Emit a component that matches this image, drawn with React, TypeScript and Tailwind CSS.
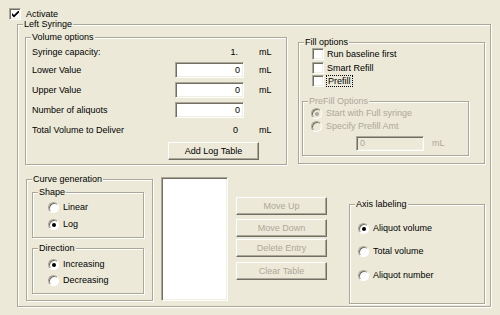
import React from 'react';

const GroupBox: React.FC<{ label: string; className?: string; disabled?: boolean; children?: React.ReactNode }> = ({ label, className = '', disabled, children }) => (
  <div className={`relative border border-[#ACA899] shadow-[inset_1px_1px_0_#ffffff,1px_1px_0_#ffffff] ${className}`}>
    <span className={`absolute -top-[7px] left-[5px] px-[1px] bg-[#ECE9D8] leading-[12px] whitespace-nowrap ${disabled ? 'text-[#ACA899]' : 'text-black'}`}>
      {label}
    </span>
    {children}
  </div>
);

const Sunken: React.FC<{ className?: string; children?: React.ReactNode }> = ({ className = '', children }) => (
  <div className={`border border-t-[#ACA899] border-l-[#ACA899] border-b-white border-r-white shadow-[inset_1px_1px_0_#716F64,inset_-1px_-1px_0_#F1EFE2] ${className}`}>
    {children}
  </div>
);

const Checkbox: React.FC<{ checked?: boolean }> = ({ checked }) => (
  <Sunken className="w-[12px] h-[12px] bg-white flex items-center justify-center shrink-0">
    {checked && (
      <svg width="7" height="7" viewBox="0 0 7 7">
        <path d="M0 2 L2 4 L7 -1 L7 1.5 L2 6.5 L0 4.5 Z" fill="#000" />
      </svg>
    )}
  </Sunken>
);

const Radio: React.FC<{ checked?: boolean; disabled?: boolean }> = ({ checked, disabled }) => (
  <div
    className={`w-[11px] h-[11px] rounded-full border border-t-[#ACA899] border-l-[#ACA899] border-b-white border-r-white shadow-[inset_1px_1px_0_#716F64] flex items-center justify-center shrink-0 ${disabled ? 'bg-[#ECE9D8]' : 'bg-white'}`}
  >
    {checked && <div className={`w-[4px] h-[4px] rounded-full ${disabled ? 'bg-[#ACA899]' : 'bg-black'}`} />}
  </div>
);

const Button: React.FC<{ label: string; disabled?: boolean; className?: string }> = ({ label, disabled, className = '' }) => (
  <div
    className={`w-[91px] h-[18px] flex items-center justify-center border border-t-white border-l-white border-r-[#716F64] border-b-[#716F64] shadow-[inset_-1px_-1px_0_#ACA899] ${disabled ? 'text-[#ACA899]' : 'text-black'} ${className}`}
  >
    {label}
  </div>
);

const TextBox: React.FC<{ value: string; className?: string }> = ({ value, className = '' }) => (
  <Sunken className={`w-[69px] h-[16px] bg-white flex items-center justify-end pr-[3px] ${className}`}>{value}</Sunken>
);

const RadioRow: React.FC<{ label: string; checked?: boolean; disabled?: boolean; className?: string }> = ({ label, checked, disabled, className = '' }) => (
  <div className={`flex items-center h-[11px] ${className}`}>
    <Radio checked={checked} disabled={disabled} />
    <span className={`ml-[4px] whitespace-nowrap ${disabled ? 'text-[#ACA899]' : ''}`}>{label}</span>
  </div>
);

export default function App() {
  return (
    <div
      className="w-[500px] h-[315px] bg-[#ECE9D8] overflow-hidden text-black text-[9px] leading-[11px]"
      style={{ fontFamily: '"Liberation Sans", Arial, sans-serif' }}
    >
      <div className="flex items-center h-[12px] mt-[8px] ml-[9px]">
        <Checkbox checked />
        <span className="ml-[5px]">Activate</span>
      </div>

      <GroupBox label="Left Syringe" className="ml-[17px] mt-[4px] w-[474px] h-[283px]">
        <div className="flex items-start ml-[7px] mt-[12px]">
          <GroupBox label="Volume options" className="w-[262px] h-[128px]">
            <div className="flex flex-col pl-[6px] pt-[6px]">
              <div className="flex items-center h-[16px]">
                <span className="w-[143px]">Syringe capacity:</span>
                <span className="w-[69px] text-right pr-[6px]">1.</span>
                <span className="ml-[15px]">mL</span>
              </div>
              <div className="flex items-center h-[16px] mt-[2px]">
                <span className="w-[143px]">Lower Value</span>
                <TextBox value="0" />
                <span className="ml-[15px]">mL</span>
              </div>
              <div className="flex items-center h-[16px] mt-[4px]">
                <span className="w-[143px]">Upper Value</span>
                <TextBox value="0" />
                <span className="ml-[15px]">mL</span>
              </div>
              <div className="flex items-center h-[16px] mt-[4px]">
                <span className="w-[143px]">Number of aliquots</span>
                <TextBox value="0" />
              </div>
              <div className="flex items-center h-[16px] mt-[4px]">
                <span className="w-[143px]">Total Volume to Deliver</span>
                <span className="w-[69px] text-right pr-[6px]">0</span>
                <span className="ml-[15px]">mL</span>
              </div>
              <Button label="Add Log Table" className="mt-[4px] ml-[136px]" />
            </div>
          </GroupBox>

          <GroupBox label="Fill options" className="ml-[11px] mt-[5px] w-[187px] h-[122px]">
            <div className="flex flex-col pt-[5px]">
              <div className="flex items-center h-[12px] ml-[13px]">
                <Checkbox />
                <span className="ml-[3px]">Run baseline first</span>
              </div>
              <div className="flex items-center h-[12px] ml-[13px] mt-[2px]">
                <Checkbox />
                <span className="ml-[3px]">Smart Refill</span>
              </div>
              <div className="flex items-center h-[12px] ml-[13px] mt-[1px]">
                <Checkbox />
                <span className="ml-[2px] px-[1px] border border-dotted border-black leading-[10px]">Prefill</span>
              </div>
              <GroupBox label="PreFill Options" disabled className="ml-[3px] mt-[14px] w-[167px] h-[55px]">
                <div className="flex flex-col pt-[6px]">
                  <RadioRow label="Start with Full syringe" checked disabled className="ml-[8px]" />
                  <RadioRow label="Specify Prefill Amt" disabled className="ml-[8px] mt-[2px]" />
                  <div className="flex items-center mt-[4px] ml-[53px]">
                    <Sunken className="w-[68px] h-[15px] bg-[#ECE9D8] flex items-center pl-[3px] text-[#ACA899]">0</Sunken>
                    <span className="ml-[8px] text-[#ACA899]">mL</span>
                  </div>
                </div>
              </GroupBox>
            </div>
          </GroupBox>
        </div>

        <div className="flex items-start ml-[8px] mt-[12px]">
          <GroupBox label="Curve generation" className="mt-[2px] w-[127px] h-[122px]">
            <div className="flex flex-col ml-[5px] mt-[12px]">
              <GroupBox label="Shape" className="w-[112px] h-[46px]">
                <div className="flex flex-col pl-[15px] pt-[9px]">
                  <RadioRow label="Linear" />
                  <RadioRow label="Log" checked className="mt-[6px]" />
                </div>
              </GroupBox>
              <GroupBox label="Direction" className="mt-[10px] w-[112px] h-[46px]">
                <div className="flex flex-col pl-[15px] pt-[10px]">
                  <RadioRow label="Increasing" checked />
                  <RadioRow label="Decreasing" className="mt-[5px]" />
                </div>
              </GroupBox>
            </div>
          </GroupBox>

          <Sunken className="ml-[8px] w-[67px] h-[124px] bg-white" />

          <div className="flex flex-col ml-[8px] mt-[20px]">
            <Button label="Move Up" disabled />
            <Button label="Move Down" disabled className="mt-[4px]" />
            <Button label="Delete Entry" disabled className="mt-[2px]" />
            <Button label="Clear Table" disabled className="mt-[5px]" />
          </div>

          <GroupBox label="Axis labeling" className="ml-[22px] mt-[27px] w-[136px] h-[100px]">
            <div className="flex flex-col pl-[8px] pt-[18px]">
              <RadioRow label="Aliquot volume" checked />
              <RadioRow label="Total volume" className="mt-[12px]" />
              <RadioRow label="Aliquot number" className="mt-[13px]" />
            </div>
          </GroupBox>
        </div>
      </GroupBox>
    </div>
  );
}
